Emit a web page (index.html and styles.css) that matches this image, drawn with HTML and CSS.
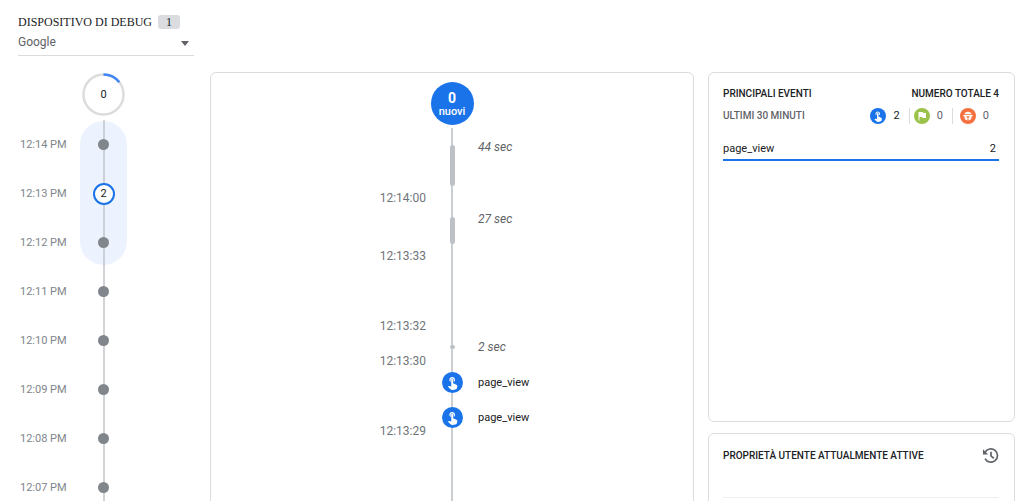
FILE: index.html
```html
<!DOCTYPE html>
<html lang="it">
<head>
    <meta charset="UTF-8">
    <meta name="viewport" content="width=device-width, initial-scale=1.0">
    <title>DebugView</title>
    <link rel="stylesheet" href="styles.css">
</head>
<body>
    <svg class="sprite" aria-hidden="true">
        <symbol id="touch" viewBox="0 0 24 24">
            <path d="M9 11.24V7.5a2.5 2.5 0 0 1 5 0v3.74c1.21-.81 2-2.18 2-3.74C16 5.01 13.99 3 11.5 3S7 5.01 7 7.5c0 1.56.79 2.93 2 3.74zm9.84 4.63-4.54-2.26c-.17-.07-.35-.11-.54-.11H13v-6c0-.83-.67-1.5-1.5-1.5S10 6.67 10 7.5v10.74l-3.43-.72c-.08-.01-.15-.03-.24-.03-.31 0-.59.13-.79.33l-.79.8 4.94 4.94c.27.27.65.44 1.06.44h6.79c.75 0 1.33-.55 1.44-1.28l.75-5.27c.01-.07.02-.14.02-.2 0-.62-.38-1.16-.91-1.38z"/>
        </symbol>
        <symbol id="flag" viewBox="0 0 24 24">
            <path d="M14.4 6 14 4H5v17h2v-7h5.6l.4 2h7V6z"/>
        </symbol>
        <symbol id="bug" viewBox="0 0 24 24">
            <path d="M5 8.500C5.600 5.500 8 3.500 12 3.500s6.400 2 7 5zM2.500 10h19v2.500h-19zM5 12.500h4v2h2v6.300c-3.600-.3-6-2.600-6-5.800zM19 12.500h-4v2h-2v6.300c3.600-.3 6-2.600 6-5.800z"/>
        </symbol>
    </svg>

    <main class="layout">
        <aside class="device">
            <div class="device-head">
                <label for="device-select">DISPOSITIVO DI DEBUG</label>
                <span class="badge">1</span>
            </div>
            <div class="select-wrap">
                <select id="device-select">
                    <option>Google</option>
                </select>
            </div>
            <div class="progress">
                <svg viewBox="0 0 44 44" aria-hidden="true">
                    <circle cx="22" cy="22" r="20.5" fill="#fff" stroke="#dcdcdc" stroke-width="2.5"/>
                    <path d="M22 1.5A20.5 20.5 0 0 1 38.2 9.5" fill="none" stroke="#4285f4" stroke-width="2.5"/>
                </svg>
                <span>0</span>
            </div>
            <ul class="minutes">
                <li><time>12:14 PM</time><i class="dot"></i></li>
                <li><time>12:13 PM</time><button class="count">2</button></li>
                <li><time>12:12 PM</time><i class="dot"></i></li>
                <li><time>12:11 PM</time><i class="dot"></i></li>
                <li><time>12:10 PM</time><i class="dot"></i></li>
                <li><time>12:09 PM</time><i class="dot"></i></li>
                <li><time>12:08 PM</time><i class="dot"></i></li>
                <li><time>12:07 PM</time><i class="dot"></i></li>
            </ul>
        </aside>

        <section class="card stream">
            <button class="new-events"><b>0</b>nuovi</button>
            <ul class="seconds">
                <li class="gap long"><i class="bar"></i><em>44 sec</em></li>
                <li class="mark"><time>12:14:00</time></li>
                <li class="gap medium"><i class="bar"></i><em>27 sec</em></li>
                <li class="mark"><time>12:13:33</time></li>
                <li class="empty"></li>
                <li class="mark"><time>12:13:32</time></li>
                <li class="gap short"><i class="bar"></i><em>2 sec</em></li>
                <li class="mark"><time>12:13:30</time></li>
                <li class="event"><svg class="icon blue"><use href="#touch"/></svg><button>page_view</button></li>
                <li class="event"><svg class="icon blue"><use href="#touch"/></svg><button>page_view</button></li>
                <li class="mark"><time>12:13:29</time></li>
            </ul>
        </section>

        <div class="side">
            <section class="card top-events">
                <div class="row title">
                    <h2>PRINCIPALI EVENTI</h2>
                    <span>NUMERO TOTALE 4</span>
                </div>
                <div class="row totals">
                    <h3>ULTIMI 30 MINUTI</h3>
                    <div class="filters">
                        <button class="active" aria-label="Eventi"><svg class="icon blue"><use href="#touch"/></svg>2</button>
                        <button aria-label="Conversioni"><svg class="icon green"><use href="#flag"/></svg>0</button>
                        <button aria-label="Errori"><svg class="icon orange"><use href="#bug"/></svg>0</button>
                    </div>
                </div>
                <ul class="event-list">
                    <li><span>page_view</span><span class="value">2</span></li>
                </ul>
            </section>
            <section class="card properties">
                <div class="row">
                    <h2>PROPRIETÀ UTENTE ATTUALMENTE ATTIVE</h2>
                    <button class="history" aria-label="Cronologia">
                        <svg viewBox="0 0 18 18" aria-hidden="true">
                            <path d="M3.2 5.8A7 7 0 1 1 3.2 12.2M9.5 5V9.3L12.5 12" fill="none" stroke="#5f6368" stroke-width="1.8"/>
                            <path d="M1 2.5V8H6.5z" fill="#5f6368"/>
                        </svg>
                    </button>
                </div>
                <hr>
            </section>
        </div>
    </main>
</body>
</html>
```
FILE: styles.css
```css
* {
    box-sizing: border-box;
}
body {
    margin: 0;
    height: 100vh;
    overflow: hidden;
    background: #fff;
    color: #202124;
    font-family: Roboto, Arial, sans-serif;
    font-size: 12px;
    line-height: 16px;
}
ul {
    list-style: none;
    margin: 0;
    padding: 0;
}
h2, h3 {
    margin: 0;
    font-size: 10px;
    font-weight: 500;
}
button {
    padding: 0;
    border: 0;
    background: none;
    color: inherit;
    font: inherit;
    cursor: pointer;
}
.sprite {
    display: none;
}
.layout {
    display: grid;
    grid-template-columns: 192px minmax(0, 484fr) minmax(0, 321fr);
    padding: 0 9px 0 18px;
}
.card {
    border: 1px solid #dadce0;
    border-radius: 6px;
}
.icon {
    width: 16px;
    height: 16px;
    padding: 2px;
    border-radius: 50%;
    fill: #fff;
    flex: none;
}
.blue {
    background: #1a73e8;
}
.green {
    background: #9bc34a;
}
.orange {
    background: #f4703f;
}

/* device column */
.device {
    padding: 14px 16px 0 0;
}
.device-head {
    display: flex;
    align-items: center;
    gap: 6px;
    font-family: "Liberation Serif", serif;
    color: #202124;
}
.badge {
    width: 22px;
    height: 14px;
    line-height: 14px;
    border-radius: 3px;
    background: #dadce0;
    text-align: center;
}
.select-wrap {
    position: relative;
    border-bottom: 1px solid #dadce0;
}
.select-wrap::after {
    content: "";
    position: absolute;
    right: 5px;
    top: 11px;
    border: 4px solid transparent;
    border-top: 5px solid #5f6368;
    border-bottom: 0;
    pointer-events: none;
}
.select-wrap select {
    appearance: none;
    display: block;
    width: 100%;
    height: 25px;
    padding: 0 0 2px;
    border: 0;
    background: none;
    color: #5f6368;
    font: inherit;
}
.progress {
    display: grid;
    place-items: center;
    width: 43px;
    height: 43px;
    margin: 17px 0 0 64px;
    font-size: 11px;
}
.progress > * {
    grid-area: 1 / 1;
}
.progress svg {
    width: 43px;
    height: 43px;
}
.minutes {
    position: relative;
    margin-top: 4px;
    color: #80868b;
    font-size: 11px;
}
/* highlighted minutes */
.minutes::before {
    content: "";
    position: absolute;
    left: 62px;
    top: 1px;
    width: 47px;
    height: 144px;
    border-radius: 24px;
    background: #edf3fe;
}
.minutes::after {
    content: "";
    position: absolute;
    left: 85px;
    top: 0;
    bottom: -20px;
    width: 2px;
    background: #bdc1c6;
    opacity: .7;
}
.minutes li {
    position: relative;
    z-index: 1;
    display: grid;
    grid-template-columns: 62px 47px;
    align-items: center;
    height: 49px;
}
.minutes time {
    padding-left: 2px;
}
.dot {
    justify-self: center;
    width: 11px;
    height: 11px;
    border-radius: 50%;
    background: #80868b;
}
.count {
    justify-self: center;
    width: 22px;
    height: 22px;
    border: 2px solid #1a73e8;
    border-radius: 50%;
    background: #fff;
    color: #202124;
    line-height: 18px;
}

/* stream of seconds */
.stream {
    display: flex;
    flex-direction: column;
    align-items: center;
    min-height: 100vh;
    margin-top: 72px;
    padding-top: 9px;
}
.new-events {
    display: flex;
    flex-direction: column;
    align-items: center;
    justify-content: center;
    width: 43px;
    height: 43px;
    padding-top: 2px;
    border-radius: 50%;
    background: #1a73e8;
    color: #fff;
    font-size: 11px;
    font-weight: 500;
    line-height: 12px;
}
.new-events b {
    font-size: 14px;
    line-height: 15px;
}
.seconds {
    position: relative;
    flex: 1;
    width: 100%;
    margin-top: 1px;
}
.seconds::before {
    content: "";
    position: absolute;
    left: calc(50% - 1px);
    top: 2px;
    bottom: 0;
    width: 2px;
    background: #cccfd2;
}
.seconds li {
    position: relative;
    display: grid;
    grid-template-columns: 1fr 52px 1fr;
    align-items: start;
}
/* timestamps sit on the border between two slots */
.seconds .mark {
    height: 0;
    color: #70757a;
    text-align: right;
}
.mark time {
    margin: -8px 0;
}
.gap {
    padding: 19px 0 12px;
}
.bar {
    grid-column: 2;
    justify-self: center;
    width: 5px;
    border-radius: 3px;
    background: #bdc1c6;
}
.long .bar {
    height: 41px;
}
.medium .bar {
    height: 27px;
}
.short .bar {
    height: 4px;
}
.gap em {
    height: 0;
    margin-top: -6px;
    color: #5f6368;
}
.empty {
    height: 70px;
}
.event {
    padding-top: 11px;
    height: 35px;
}
.event .icon {
    grid-column: 2;
    justify-self: center;
    width: 21px;
    height: 21px;
    padding: 3px;
}
.event button {
    justify-self: start;
    font-size: 11px;
    line-height: 21px;
}

/* right column */
.side {
    margin: 72px 0 0 14px;
}
.side .card {
    padding: 13px 15px 0 14px;
}
.row {
    display: flex;
    align-items: center;
    justify-content: space-between;
}
.title {
    font-size: 10px;
    font-weight: 500;
}
.top-events {
    height: 350px;
}
.totals {
    margin-top: 6px;
}
.totals h3 {
    color: #5f6368;
}
.filters {
    display: flex;
    padding-right: 10px;
    color: #5f6368;
}
.filters button {
    display: flex;
    align-items: center;
    gap: 7px;
    padding: 0 9px 0 4px;
    font-size: 11px;
}
.filters .active {
    color: #202124;
}
.filters button + button {
    border-left: 1px solid #dadce0;
}
.filters button:last-child {
    padding: 0 0 0 7px;
}
.event-list {
    margin-top: 17px;
    font-size: 11px;
}
.event-list li {
    display: flex;
    justify-content: space-between;
    padding-bottom: 2px;
    border-bottom: 2px solid #1a73e8;
}
.value {
    padding-right: 3px;
}
.side .properties {
    height: 350px;
    margin-top: 11px;
}
.history {
    display: flex;
}
.history svg {
    width: 17px;
    height: 17px;
}
.properties hr {
    margin: 33px 0 0;
    border: 0;
    border-top: 1px solid #eceef0;
}
```
